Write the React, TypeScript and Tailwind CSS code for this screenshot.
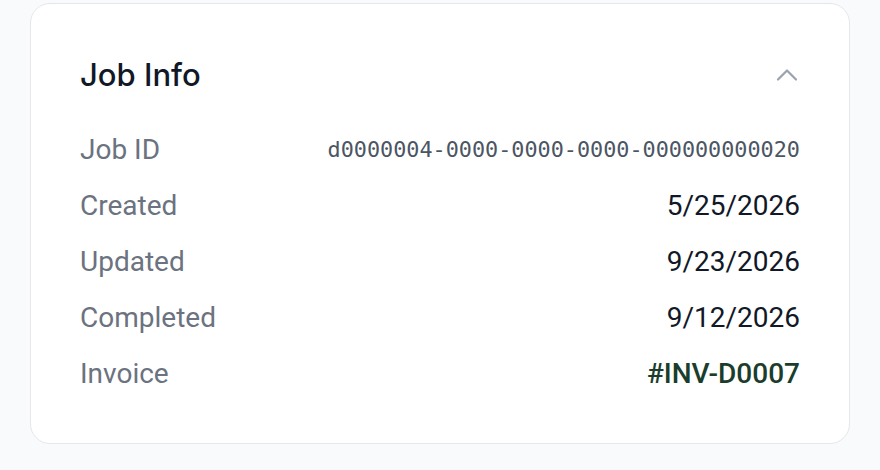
import { ChevronUp } from "lucide-react";

const rows: { label: string; value: string; kind?: "mono" | "link" }[] = [
  { label: "Job ID", value: "d0000004-0000-0000-0000-000000000020", kind: "mono" },
  { label: "Created", value: "5/25/2026" },
  { label: "Updated", value: "9/23/2026" },
  { label: "Completed", value: "9/12/2026" },
  { label: "Invoice", value: "#INV-D0007", kind: "link" },
];

const App = () => {
  return (
    <main className="min-h-[470px] w-[880px] bg-[#f9fafb] px-[30px] pt-[3px] font-['Roboto',sans-serif]">
      <section className="rounded-[20px] border border-[#e5e7eb] bg-white px-[49px] pb-[41px] pt-[43px]">
        <div className="flex h-[56px] items-center justify-between">
          <h2 className="font-['Inter',sans-serif] text-[31px] font-medium text-[#111827]">
            Job Info
          </h2>
          <ChevronUp className="mr-[-5px] size-[36px] text-[#9ca3af]" strokeWidth={1.5} />
        </div>
        <dl className="mt-[19px] flex flex-col">
          {rows.map((row) => (
            <div key={row.label} className="flex h-[56px] items-center justify-between">
              <dt className="text-[28px] text-[#6b7280]">{row.label}</dt>
              <dd
                className={
                  row.kind === "mono"
                    ? "font-['DejaVu_Sans_Mono',monospace] text-[21.8px] text-[#4b5563]"
                    : row.kind === "link"
                      ? "text-[28px] font-medium text-[#1a3d2c]"
                      : "text-[28px] text-[#111827]"
                }
              >
                {row.value}
              </dd>
            </div>
          ))}
        </dl>
      </section>
    </main>
  );
};

export default App;
